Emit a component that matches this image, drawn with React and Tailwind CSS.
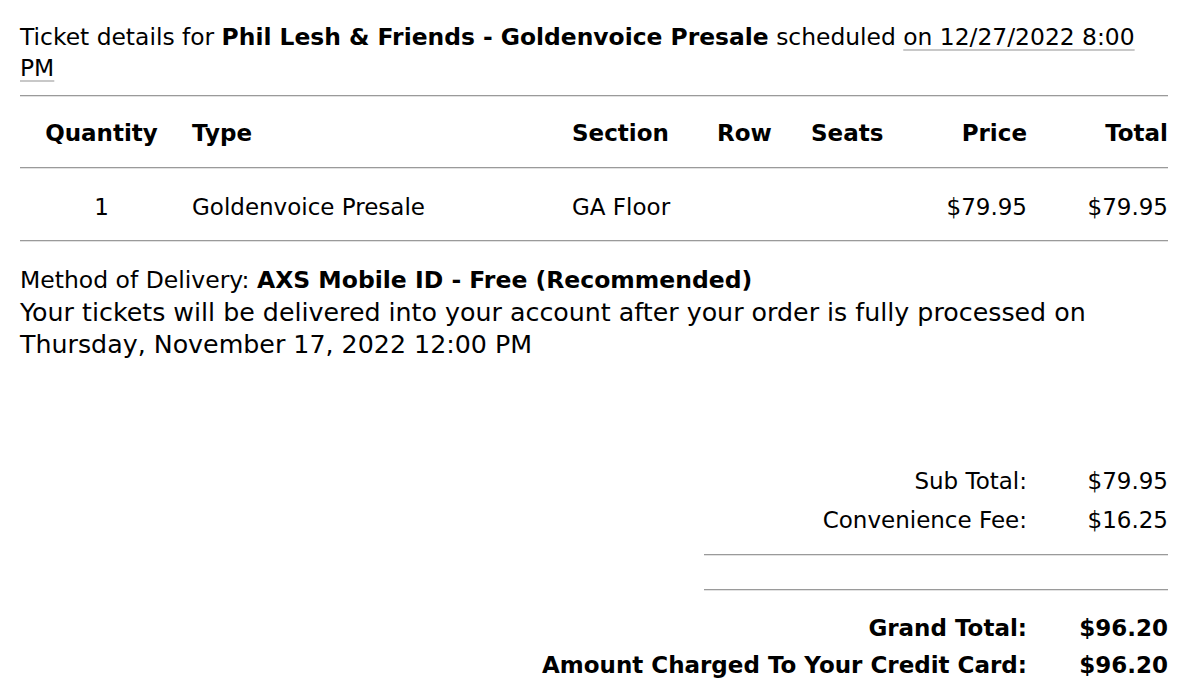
import React from 'react';

const Rule = ({ className = '' }) => (
  <div className={`h-[2px] border-t border-t-[#9a9a9a] border-b border-b-[#e2e2e2] ${className}`} />
);

const TotalRow = ({ label, value, bold, className = '' }) => (
  <div className={`flex justify-end ${bold ? 'font-bold' : ''} ${className}`}>
    <div className="text-right">{label}</div>
    <div className="w-[141px] text-right">{value}</div>
  </div>
);

const App = () => {
  const cols = 'grid grid-cols-[172px_380px_145px_94px_100px_116px_141px]';
  const link = 'underline decoration-[#c8c8c8] underline-offset-[4px]';

  return (
    <div className="min-h-screen bg-white pl-[20px] pr-[32px] pt-[22px] text-[23px] text-black font-['DejaVu_Sans',Verdana,sans-serif]">
      <p className="text-[23.4px] leading-[31px]">
        Ticket details for <b>Phil Lesh &amp; Friends - Goldenvoice Presale</b> scheduled{' '}
        <span className={link}>on 12/27/2022 8:00</span>
        <br />
        <span className={link}>PM</span>
      </p>

      <Rule className="mt-[11px]" />

      <div className={`${cols} font-bold leading-[24px] pt-[24px] pb-[22px]`}>
        <div className="text-center pr-[9px]">Quantity</div>
        <div>Type</div>
        <div>Section</div>
        <div>Row</div>
        <div>Seats</div>
        <div className="text-right">Price</div>
        <div className="text-right">Total</div>
      </div>
      <Rule />
      <div className={`${cols} leading-[24px] pt-[26px] pb-[21px]`}>
        <div className="text-center pr-[9px]">1</div>
        <div>Goldenvoice Presale</div>
        <div>GA Floor</div>
        <div></div>
        <div></div>
        <div className="text-right">$79.95</div>
        <div className="text-right">$79.95</div>
      </div>
      <Rule />

      <div className="mt-[22px] leading-[32.5px]">
        <div className="text-[23.5px]">
          Method of Delivery: <b>AXS Mobile ID - Free (Recommended)</b>
        </div>
        <div className="text-[25.3px]">
          Your tickets will be delivered into your account after your order is fully processed on
          <br />
          Thursday, November 17, 2022 12:00 PM
        </div>
      </div>

      <div className="mt-[100px] leading-[39px]">
        <TotalRow label="Sub Total:" value="$79.95" />
        <TotalRow label="Convenience Fee:" value="$16.25" />
      </div>
      <div className="ml-auto w-[464px]">
        <Rule className="mt-[14px]" />
        <Rule className="mt-[33px]" />
      </div>
      <div className="mt-[19px] leading-[37px]">
        <TotalRow label="Grand Total:" value="$96.20" bold />
        <TotalRow label="Amount Charged To Your Credit Card:" value="$96.20" bold />
      </div>
    </div>
  );
};

export default App;
